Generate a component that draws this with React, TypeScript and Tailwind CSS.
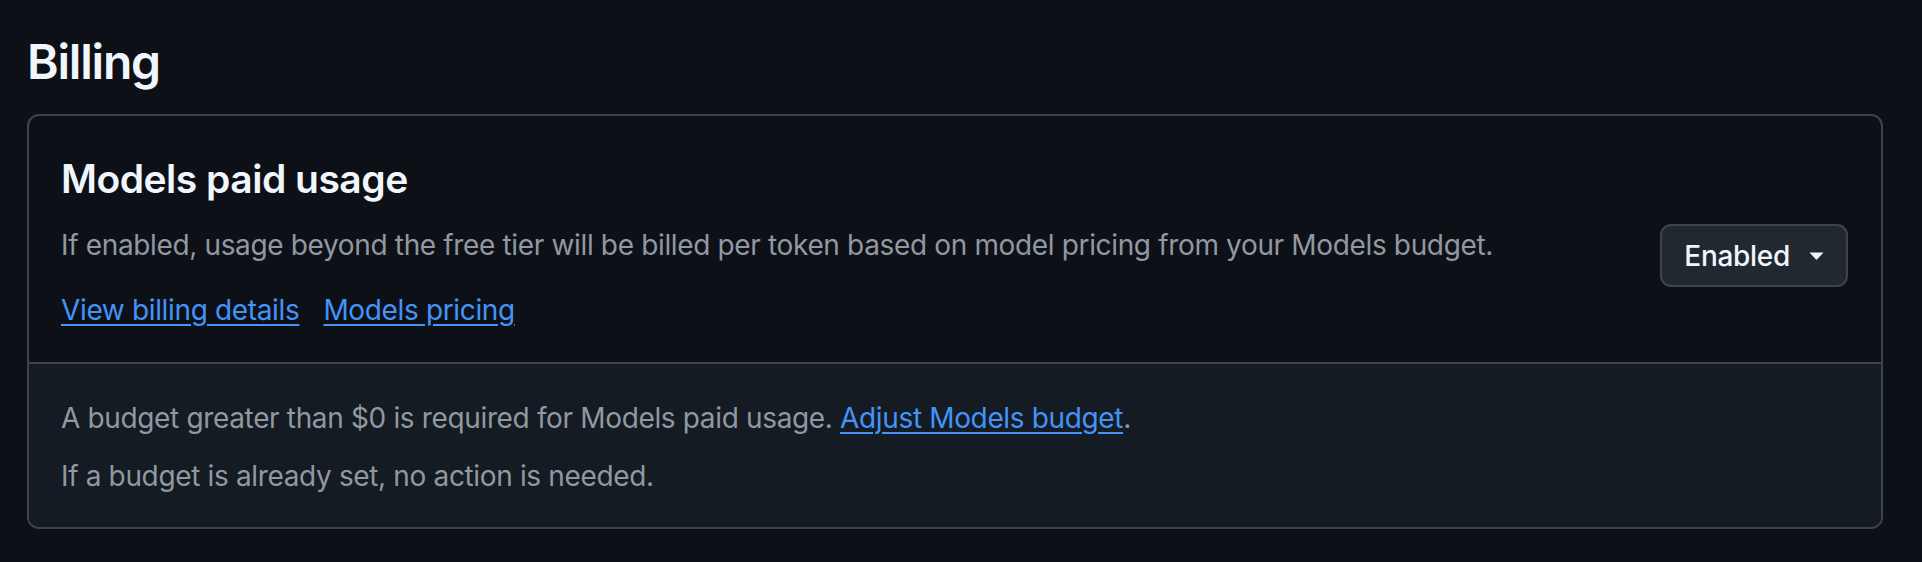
export default function App() {
  return (
    <div className="min-h-[562px] w-full bg-[#0d1117] pl-[27px] pr-[39px] pt-[32px] font-['Inter',sans-serif] text-[#f0f6fc]">
      <h1 className="text-[48px] font-semibold leading-[60px] tracking-[-1.2px]">Billing</h1>

      <section className="mt-[22px] overflow-hidden rounded-[12px] border-2 border-[#3d444d]">
        {/* Header */}
        <div className="flex justify-between pl-[32px] pr-[33px] pt-[41px] pb-[32px]">
          <div className="flex flex-col tracking-[-0.35px]">
            <h2 className="text-[39px] font-semibold leading-[44px] tracking-[-0.5px]">Models paid usage</h2>
            <p className="mt-[24px] text-[28px] leading-[40px] text-[#9198a1]">
              If enabled, usage beyond the free tier will be billed per token based on model pricing from your Models budget.
            </p>
            <div className="mt-[25px] flex gap-[24px] text-[28px] leading-[40px] text-[#4493f8]">
              <a href="#" className="underline underline-offset-[4px]">View billing details</a>
              <a href="#" className="underline underline-offset-[4px]">Models pricing</a>
            </div>
          </div>
          <button className="mt-[67px] flex h-[63px] items-center gap-[19px] self-start rounded-[11px] border-2 border-[#3d444d] bg-[#212830] pl-[22px] pr-[22px] text-[28px] font-medium tracking-[-0.3px] text-[#f0f6fc]">
            Enabled
            <svg width="15" height="8" viewBox="0 0 15 8" className="fill-[#f0f6fc]">
              <path d="M0.5 0.5 L14.5 0.5 L8.2 7.3 Q7.5 8 6.8 7.3 Z" />
            </svg>
          </button>
        </div>

        {/* Footer */}
        <div className="border-t-2 border-[#3d444d] bg-[#151b23] pl-[32px] pr-[33px] pt-[34px] pb-[31px] text-[28px] leading-[40px] tracking-[-0.35px] text-[#9198a1]">
          <p>
            A budget greater than $0 is required for Models paid usage.{' '}
            <a href="#" className="text-[#4493f8] underline underline-offset-[4px]">Adjust Models budget</a>.
          </p>
          <p className="mt-[18px]">If a budget is already set, no action is needed.</p>
        </div>
      </section>
    </div>
  )
}
